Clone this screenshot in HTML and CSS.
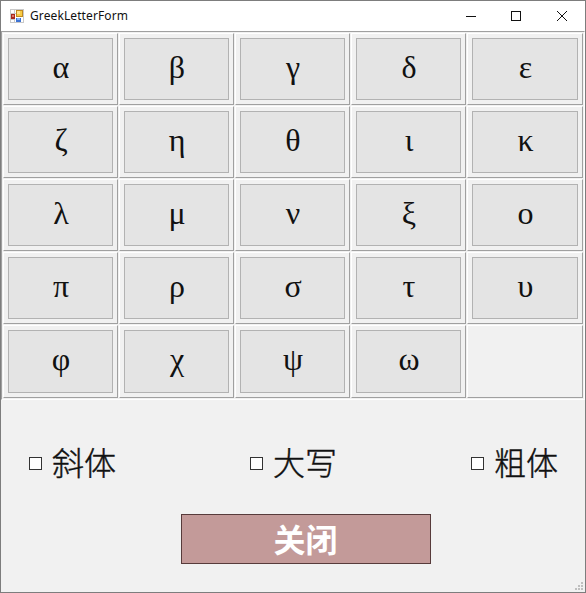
FILE: index.html
```html
<!DOCTYPE html>
<html lang="zh-CN">
<head>
<meta charset="utf-8">
<title>GreekLetterForm</title>
<link rel="stylesheet" href="styles.css">
</head>
<body>
<div class="window">
  <header class="titlebar">
    <svg class="app-icon" width="14" height="14" viewBox="0 0 14 14" shape-rendering="crispEdges">
      <path d="M.5 .5H13.500V13.500H.5zM4.500 0V14M0 4.500H6M0 10.500H5" fill="none" stroke="#c9c9c9"/>
      <rect x="6" y="1" width="7" height="7" fill="#c08a20"/>
      <rect x="7" y="2" width="5" height="5" fill="#f8cb45"/>
      <rect x="7" y="2" width="3" height="3" fill="#ffe28a"/>
      <rect x="1" y="5" width="4" height="5" fill="#a8281e"/>
      <rect x="2" y="6" width="2" height="2" fill="#e07868"/>
      <rect x="6" y="9" width="5" height="4" fill="#3d73d4"/>
      <rect x="7" y="9" width="3" height="2" fill="#88b4f5"/>
    </svg>
    <span class="title">GreekLetterForm</span>
    <svg class="controls" width="102" height="10" viewBox="0 0 102 10" fill="none" stroke="#111">
      <path d="M0 5.500H10" shape-rendering="crispEdges"/>
      <rect x="45.500" y=".5" width="9" height="9" shape-rendering="crispEdges"/>
      <path d="M91 0L101 10M101 0L91 10"/>
    </svg>
  </header>
  <main class="client">
    <div class="letters">
      <div class="cell"><button>α</button></div>
      <div class="cell"><button>β</button></div>
      <div class="cell"><button>γ</button></div>
      <div class="cell"><button>δ</button></div>
      <div class="cell"><button>ε</button></div>
      <div class="cell"><button>ζ</button></div>
      <div class="cell"><button>η</button></div>
      <div class="cell"><button>θ</button></div>
      <div class="cell"><button>ι</button></div>
      <div class="cell"><button>κ</button></div>
      <div class="cell"><button>λ</button></div>
      <div class="cell"><button>μ</button></div>
      <div class="cell"><button>ν</button></div>
      <div class="cell"><button>ξ</button></div>
      <div class="cell"><button>ο</button></div>
      <div class="cell"><button>π</button></div>
      <div class="cell"><button>ρ</button></div>
      <div class="cell"><button>σ</button></div>
      <div class="cell"><button>τ</button></div>
      <div class="cell"><button>υ</button></div>
      <div class="cell"><button>φ</button></div>
      <div class="cell"><button>χ</button></div>
      <div class="cell"><button>ψ</button></div>
      <div class="cell"><button>ω</button></div>
      <div class="cell"></div>
    </div>
    <div class="options">
      <label><input type="checkbox"><span>斜体</span></label>
      <label><input type="checkbox"><span>大写</span></label>
      <label><input type="checkbox"><span>粗体</span></label>
    </div>
    <button class="close">关闭</button>
  </main>
  <svg class="grip" width="8" height="8" viewBox="0 0 8 8" fill="#bfbfbf" shape-rendering="crispEdges">
    <path d="M6 0h2v2h-2zM3 3h2v2h-2zM6 3h2v2h-2zM0 6h2v2h-2zM3 6h2v2h-2zM6 6h2v2h-2z"/>
  </svg>
</div>
</body>
</html>
```
FILE: styles.css
```css
* { box-sizing: border-box; }
body { margin: 0; }
.window {
  position: relative;
  width: 586px;
  height: 593px;
  border: 1px solid #7d7d7d;
  background: #f1f1f1;
  color: #111;
  overflow: hidden;
}
.titlebar {
  display: flex;
  align-items: center;
  height: 30px;
  padding: 0 17px 0 9px;
  background: #fff;
}
.title {
  margin-left: 6px;
  font: 12px/16px "Noto Sans", sans-serif;
  letter-spacing: .1px;
}
.controls { margin-left: auto; overflow: visible; }
.letters {
  display: grid;
  grid-template-columns: repeat(4, 115px) 116px;
  grid-template-rows: repeat(4, 72px) 73px;
  gap: 1px;
  padding: 1px;
  border: 1px solid;
  border-color: #a0a0a0 #fff #fff #a0a0a0;
}
.cell {
  display: flex;
  padding: 4px;
  border: 1px solid;
  border-color: #fff #a0a0a0 #a0a0a0 #fff;
}
.cell button {
  flex: 1;
  padding: 0 0 5px 1px;
  border: 1px solid #b2b2b2;
  border-radius: 0;
  background: #e4e4e4;
  color: #111;
  font: 32px/36px "Liberation Serif", serif;
}
.options {
  display: flex;
  justify-content: space-between;
  padding: 39px 27px 0 28px;
}
.options label { display: flex; align-items: center; height: 48px; }
.options input {
  appearance: none;
  width: 13px;
  height: 13px;
  margin: 0;
  border: 1px solid #333;
  background: #fff;
}
.options span {
  margin-left: 10px;
  padding-bottom: 3px;
  font: 300 32px/45px "Noto Sans CJK SC", sans-serif;
  -webkit-text-stroke: .4px #111;
}
.close {
  display: block;
  width: 250px;
  height: 50px;
  margin: 27px 0 0 180px;
  padding: 0 1px 2px 0;
  border: 1px solid #573b3b;
  border-radius: 0;
  background: #c39a99;
  color: #fff;
  font: bold 32px/46px "Noto Sans CJK SC", sans-serif;
}
.grip { position: absolute; right: 2px; bottom: 2px; }
```
